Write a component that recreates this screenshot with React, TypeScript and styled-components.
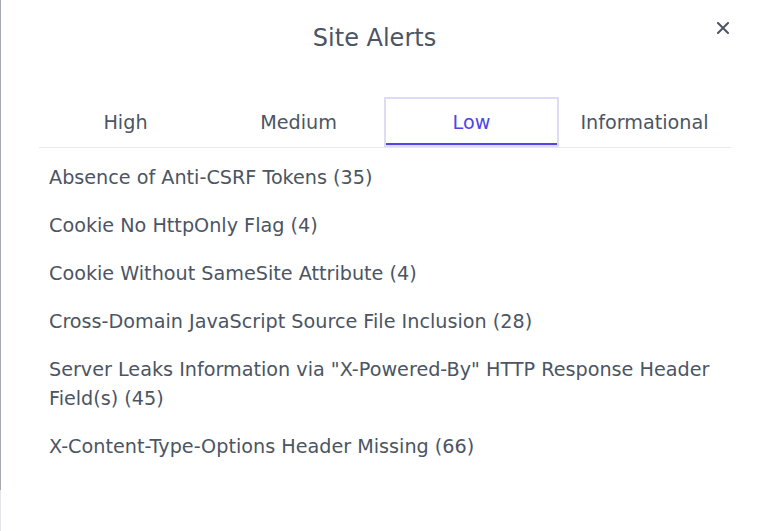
import React, { useState } from "react";
import styled, { createGlobalStyle } from "styled-components";

const GlobalStyle = createGlobalStyle`
  html, body {
    margin: 0;
    padding: 0;
    background: #ffffff;
  }
  body {
    font-family: "DejaVu Sans", "Noto Sans", sans-serif;
    color: #4b5563;
  }
`;

const Page = styled.div`
  display: flex;
  min-height: 531px;
`;

// thin strip of the page behind the dialog
const Edge = styled.div`
  width: 1px;
  flex-shrink: 0;
  background: linear-gradient(#a6a9af 0, #a6a9af 490px, #e6e6ea 490px);
`;

const Dialog = styled.div`
  flex: 1;
  background: #ffffff;
  padding: 20px 37px 40px 38px;
`;

const Header = styled.div`
  display: flex;
  align-items: flex-start;
`;

const Title = styled.h2`
  flex: 1;
  margin: 0;
  font-size: 24px;
  line-height: 36px;
  font-weight: 400;
  text-align: center;
  color: #4b5563;
`;

const CloseButton = styled.button`
  width: 21px;
  height: 21px;
  padding: 0 2px 0 0;
  margin-top: -3px;
  border: none;
  background: transparent;
  color: #4b5563;
  display: flex;
  align-items: center;
  justify-content: flex-end;
  cursor: pointer;
`;

const TabRow = styled.div`
  display: grid;
  grid-template-columns: repeat(4, 1fr);
  margin-top: 41px;
  border-bottom: 1px solid #e8e8ee;
`;

const Tab = styled.button<{ $active?: boolean }>`
  height: 50px;
  margin: 0 ${(p) => (p.$active ? "-1px 0 -1px" : "0")};
  font-family: inherit;
  font-size: 19.2px;
  background: transparent;
  cursor: pointer;
  color: ${(p) => (p.$active ? "#4f46e5" : "#4b5563")};
  border: 2px solid ${(p) => (p.$active ? "#dddcf7" : "transparent")};
  box-shadow: ${(p) => (p.$active ? "inset 0 -2px 0 #4f46e5" : "none")};
`;

const AlertList = styled.ul`
  list-style: none;
  margin: 0;
  padding: 5px 0 0;
`;

const AlertItem = styled.li`
  padding: 9.5px 10px;
  font-size: 19.2px;
  line-height: 29px;
  color: #4b5563;
`;

const tabs = ["High", "Medium", "Low", "Informational"];

const alerts = [
  { name: "Absence of Anti-CSRF Tokens", count: 35 },
  { name: "Cookie No HttpOnly Flag", count: 4 },
  { name: "Cookie Without SameSite Attribute", count: 4 },
  { name: "Cross-Domain JavaScript Source File Inclusion", count: 28 },
  {
    name: 'Server Leaks Information via "X-Powered-By" HTTP Response Header Field(s)',
    count: 45,
  },
  { name: "X-Content-Type-Options Header Missing", count: 66 },
];

const App: React.FC = () => {
  const [active, setActive] = useState("Low");

  return (
    <>
      <GlobalStyle />
      <Page>
        <Edge />
        <Dialog>
          <Header>
            <Title>Site Alerts</Title>
            <CloseButton aria-label="Close">
              <svg width="12" height="12" viewBox="0 0 12 12">
                <path
                  d="M1 1 L11 11 M11 1 L1 11"
                  stroke="currentColor"
                  strokeWidth="2"
                  strokeLinecap="square"
                />
              </svg>
            </CloseButton>
          </Header>
          <TabRow>
            {tabs.map((t) => (
              <Tab key={t} $active={t === active} onClick={() => setActive(t)}>
                {t}
              </Tab>
            ))}
          </TabRow>
          <AlertList>
            {alerts.map((a) => (
              <AlertItem key={a.name}>
                {a.name} ({a.count})
              </AlertItem>
            ))}
          </AlertList>
        </Dialog>
      </Page>
    </>
  );
};

export default App;
